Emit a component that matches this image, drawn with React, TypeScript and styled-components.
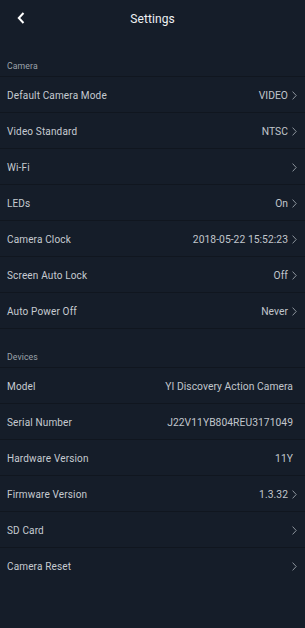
import React from 'react'
import styled, { createGlobalStyle } from 'styled-components'

const GlobalStyle = createGlobalStyle`
  html, body {
    margin: 0;
    padding: 0;
    background: #151d29;
  }
  body {
    font-family: Roboto, 'Liberation Sans', sans-serif;
  }
`

const Screen = styled.div`
  width: 305px;
  min-height: 628px;
  background: #151d29;
  display: flex;
  flex-direction: column;
`

const Header = styled.div`
  height: 38px;
  display: flex;
  align-items: center;
  justify-content: center;
  position: relative;
`

const BackButton = styled.div`
  position: absolute;
  left: 15px;
  top: 11px;
  width: 12px;
  height: 14px;
  display: flex;
  align-items: center;
  justify-content: center;
`

const Title = styled.div`
  color: #eef1f4;
  font-size: 12px;
  letter-spacing: 0.1px;
`

const SectionLabel = styled.div`
  height: 39px;
  box-sizing: border-box;
  display: flex;
  align-items: flex-end;
  padding: 0 0 5px 7px;
  color: #9ca3ab;
  font-size: 8.7px;
  letter-spacing: 0.1px;
  border-bottom: 1px solid #10161f;
`

const Row = styled.div<{ $last?: boolean }>`
  height: 36px;
  box-sizing: border-box;
  display: flex;
  align-items: center;
  justify-content: space-between;
  padding: 1px 8px 0 7px;
  border-bottom: 1px solid ${(p) => (p.$last ? 'transparent' : '#10161f')};
`

const Label = styled.span`
  color: #c6cbd1;
  font-size: 10px;
  letter-spacing: 0.15px;
`

const Value = styled.span<{ $arrow?: boolean }>`
  display: flex;
  align-items: center;
  gap: 4px;
  color: #c1c6cc;
  font-size: 10.3px;
  letter-spacing: 0.05px;
  padding-right: ${(p) => (p.$arrow ? '0' : '4px')};
`

const Chevron = () => (
  <svg width="5" height="9" viewBox="0 0 5 9">
    <path d="M0.6 0.6 L4.2 4.5 L0.6 8.4" fill="none" stroke="#9aa1a9" strokeWidth="0.9" />
  </svg>
)

type Item = { label: string; value?: string; arrow?: boolean }

const camera: Item[] = [
  { label: 'Default Camera Mode', value: 'VIDEO', arrow: true },
  { label: 'Video Standard', value: 'NTSC', arrow: true },
  { label: 'Wi-Fi', arrow: true },
  { label: 'LEDs', value: 'On', arrow: true },
  { label: 'Camera Clock', value: '2018-05-22 15:52:23', arrow: true },
  { label: 'Screen Auto Lock', value: 'Off', arrow: true },
  { label: 'Auto Power Off', value: 'Never', arrow: true },
]

const devices: Item[] = [
  { label: 'Model', value: 'YI Discovery Action Camera' },
  { label: 'Serial Number', value: 'J22V11YB804REU3171049' },
  { label: 'Hardware Version', value: '11Y' },
  { label: 'Firmware Version', value: '1.3.32', arrow: true },
  { label: 'SD Card', arrow: true },
  { label: 'Camera Reset', arrow: true },
]

function SettingRow({ item, last }: { item: Item; last?: boolean }) {
  return (
    <Row $last={last}>
      <Label>{item.label}</Label>
      <Value $arrow={item.arrow}>
        {item.value}
        {item.arrow && <Chevron />}
      </Value>
    </Row>
  )
}

export default function App() {
  return (
    <Screen>
      <GlobalStyle />
      <Header>
        <BackButton>
          <svg width="8" height="12" viewBox="0 0 8 12">
            <path d="M6.5 1 L1.8 6 L6.5 11" fill="none" stroke="#ffffff" strokeWidth="2" />
          </svg>
        </BackButton>
        <Title>Settings</Title>
      </Header>
      <SectionLabel>Camera</SectionLabel>
      {camera.map((item) => (
        <SettingRow key={item.label} item={item} />
      ))}
      <SectionLabel>Devices</SectionLabel>
      {devices.map((item, i) => (
        <SettingRow key={item.label} item={item} last={i === devices.length - 1} />
      ))}
    </Screen>
  )
}
